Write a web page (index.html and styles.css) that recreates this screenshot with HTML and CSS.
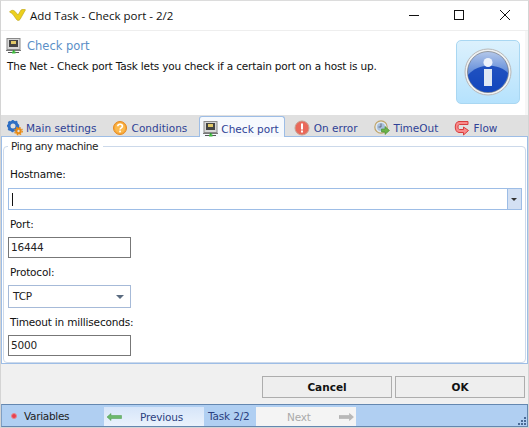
FILE: index.html

```html
<!DOCTYPE html>
<html lang="en">
<head>
  <meta charset="UTF-8" />
  <title>Add Task - Check port - 2/2</title>
  <link rel="stylesheet" href="styles.css">
</head>
<body>
  <svg class="defs" width="0" height="0">
    <defs>
      <symbol id="icoPort" viewBox="0 0 16 16">
        <rect x="1" y="0.5" width="13" height="11" fill="#d8d8d8" stroke="#8a8a8a"/>
        <rect x="3" y="2" width="9" height="7" fill="#444"/>
        <rect x="5" y="3" width="5" height="3" fill="#e0c868"/>
        <rect x="0" y="12" width="15" height="1" fill="#777"/>
        <rect x="7" y="12" width="1.5" height="2" fill="#30a030"/>
        <rect x="2" y="14" width="11" height="1" fill="#555"/>
        <rect x="6" y="13.5" width="3.5" height="2" fill="#3fc03f"/>
      </symbol>
    </defs>
  </svg>

  <div class="window">
    <div class="titlebar">
      <svg class="app-icon" width="17" height="12" viewBox="0 0 17 12">
        <path d="M0.5 3 C2.5 0.5 5 1 6.5 3 L9 6 L12 1 C13 0.2 15.5 0.2 16.5 0.8 L11 10.5 C10 11.7 8.5 11.7 7.5 10.5 L4 5.5 C3 4.2 1.5 3.6 0.5 3 Z" fill="#ecd01c" stroke="#b8a018" stroke-width="0.6"/>
      </svg>
      <span class="title">Add Task - Check port - 2/2</span>
      <div class="winbtns">
        <svg width="46" height="30" viewBox="0 0 46 30"><rect x="19" y="15" width="10" height="1" fill="#111"/></svg>
        <svg width="46" height="30" viewBox="0 0 46 30"><rect x="18.5" y="10.5" width="9" height="9" fill="none" stroke="#111"/></svg>
        <svg width="46" height="30" viewBox="0 0 46 30"><path d="M18 10 L28 20 M28 10 L18 20" stroke="#111" fill="none"/></svg>
      </div>
    </div>

    <div class="header">
      <div class="header-text">
        <div class="header-name">
          <svg width="16" height="16"><use href="#icoPort"/></svg>
          <span>Check port</span>
        </div>
        <p class="header-desc">The Net - Check port Task lets you check if a certain port on a host is up.</p>
      </div>
      <div class="info-tile">
        <svg width="48" height="48" viewBox="0 0 48 48">
          <defs>
            <linearGradient id="ball" x1="0" y1="0" x2="0" y2="1">
              <stop offset="0" stop-color="#b4c8ea"/>
              <stop offset="0.45" stop-color="#6c94dc"/>
              <stop offset="1" stop-color="#2a62d0"/>
            </linearGradient>
          </defs>
          <circle cx="24" cy="24" r="23" fill="#eef1f3" stroke="#b8b8b8"/>
          <circle cx="24" cy="24" r="20.5" fill="url(#ball)" stroke="#555" stroke-width="0.5"/>
          <path d="M4 27 C14 15 34 15 44 25 C43 36 34 44 24 44 C14 44 5 36 4 27 Z" fill="#0b3fb8" opacity="0.8"/>
          <circle cx="24" cy="14.5" r="4.5" fill="#eef3fb"/>
          <rect x="20" y="21" width="8" height="17" fill="#dfe8f4"/>
        </svg>
      </div>
    </div>

    <div class="tabs">
      <div class="tab">
        <svg width="16" height="16" viewBox="0 0 16 16">
          <circle cx="6" cy="6" r="4" fill="none" stroke="#2f6fc4" stroke-width="3"/>
          <circle cx="6" cy="6" r="5.5" fill="none" stroke="#2f6fc4" stroke-width="1.5" stroke-dasharray="2 2"/>
          <circle cx="11.5" cy="11" r="2.2" fill="none" stroke="#e88a14" stroke-width="2"/>
          <circle cx="11.5" cy="11" r="3.8" fill="none" stroke="#e88a14" stroke-width="1.2" stroke-dasharray="1.6 1.4"/>
        </svg>
        <span>Main settings</span>
      </div>
      <div class="tab">
        <svg width="16" height="16" viewBox="0 0 16 16">
          <circle cx="7" cy="8" r="6.5" fill="#f7a83a" stroke="#e68a1e"/>
          <circle cx="7" cy="8" r="5" fill="#fbb94e"/>
          <path d="M4.8 6.2 C4.8 3.6 9.4 3.6 9.4 6.2 C9.4 7.8 7 7.8 7 9.6" fill="none" stroke="#fff" stroke-width="1.6"/>
          <rect x="6.2" y="10.6" width="1.7" height="1.7" fill="#fff"/>
        </svg>
        <span>Conditions</span>
      </div>
      <div class="tab tab-on">
        <svg width="16" height="16"><use href="#icoPort"/></svg>
        <span>Check port</span>
      </div>
      <div class="tab tab-err">
        <svg width="16" height="16" viewBox="0 0 16 16">
          <circle cx="8" cy="8" r="7" fill="#e9695a" stroke="#c9a090"/>
          <rect x="7" y="3.5" width="2" height="6" fill="#fff"/>
          <rect x="7" y="10.5" width="2" height="2" fill="#fff"/>
        </svg>
        <span>On error</span>
      </div>
      <div class="tab tab-time">
        <svg width="16" height="16" viewBox="0 0 16 16">
          <circle cx="7" cy="7" r="6.2" fill="#dfe8f2" stroke="#bfa468" stroke-width="1.2"/>
          <circle cx="7" cy="7" r="4" fill="#a8c0dc"/>
          <path d="M7 3.5 V7 H4.5" fill="none" stroke="#556" stroke-width="0.8"/>
          <path d="M7.5 9 H11 V6.5 L15.5 10.5 L11 14.5 V12 H7.5 Z" fill="#6cb34a" stroke="#3f8a2a" stroke-width="0.6"/>
        </svg>
        <span>TimeOut</span>
      </div>
      <div class="tab">
        <svg width="16" height="16" viewBox="0 0 16 16">
          <path d="M14 1.5 H5 C0 1.5 0 12.5 5 12.5 H9.5 V15 L14.5 10.5 L9.5 7 V9.5 H5.5 C3.5 9.5 3.5 4.5 5.5 4.5 H14 Z" fill="#f98a8a" stroke="#d83c3c"/>
        </svg>
        <span>Flow</span>
      </div>
    </div>

    <div class="panel">
      <fieldset class="group">
        <legend>Ping any machine</legend>
        <label class="lbl lbl-first">Hostname:</label>
        <div class="combo">
          <span class="caret"></span>
          <span class="combo-btn"></span>
        </div>
        <label class="lbl">Port:</label>
        <div class="field">16444</div>
        <label class="lbl">Protocol:</label>
        <div class="select">TCP<span class="select-arrow"></span></div>
        <label class="lbl">Timeout in milliseconds:</label>
        <div class="field">5000</div>
      </fieldset>
    </div>

    <div class="actions">
      <button class="btn">Cancel</button>
      <button class="btn">OK</button>
    </div>

    <div class="statusbar">
      <span class="dot"></span>
      <span class="vars">Variables</span>
      <div class="nav nav-prev">
        <svg width="15" height="8" viewBox="0 0 15 8"><path d="M0 4 L4 0.5 V2.5 H14.5 V5.5 H4 V7.5 Z" fill="#6cb86c" stroke="#4a9a4a" stroke-width="0.5"/></svg>
        <span>Previous</span>
      </div>
      <span class="step">Task 2/2</span>
      <div class="nav nav-next">
        <span>Next</span>
        <svg width="15" height="8" viewBox="0 0 15 8"><path d="M14.5 4 L10.5 0.5 V2.5 H0 V5.5 H10.5 V7.5 Z" fill="#b8b8b8" stroke="#a8a8a8" stroke-width="0.5"/></svg>
      </div>
      <svg class="grip" width="10" height="10" viewBox="0 0 10 10">
        <rect x="7" y="1" width="2" height="2" fill="#4a6a94"/>
        <rect x="4" y="4" width="2" height="2" fill="#4a6a94"/>
        <rect x="7" y="4" width="2" height="2" fill="#4a6a94"/>
        <rect x="1" y="7" width="2" height="2" fill="#4a6a94"/>
        <rect x="4" y="7" width="2" height="2" fill="#4a6a94"/>
        <rect x="7" y="7" width="2" height="2" fill="#4a6a94"/>
      </svg>
    </div>
  </div>
</body>
</html>
```

FILE: styles.css

```css
* { box-sizing: border-box; }
html, body { margin: 0; padding: 0; }
body { width: 529px; height: 428px; overflow: hidden; font-family: "DejaVu Sans", sans-serif; font-size: 10.5px; letter-spacing: -0.17px; color: #111; background: #f0f0f0; }
.defs { position: absolute; }
.window { width: 529px; height: 428px; border: 1px solid #d4d4d4; border-top-color: #dcdcdc; display: flex; flex-direction: column; }

.titlebar { height: 30px; flex: none; background: #fff; display: flex; align-items: center; padding-left: 8px; padding-bottom: 1px; border-bottom: 1px solid #eeeeee; }
.app-icon { margin-right: 4px; }
.title { font-family: "Open Sans", sans-serif; font-size: 11.5px; letter-spacing: 0; color: #111; }
.winbtns { margin-left: auto; display: flex; }
.winbtns svg { display: block; }

.header { height: 84px; flex: none; background: #fff; display: flex; padding: 0 5px 0 5px; border-right: 3px solid #f6f6f6; }
.header-text { flex: 1; }
.header-name { display: flex; align-items: center; gap: 5px; margin-top: 6px; height: 17px; font-size: 11.5px; letter-spacing: 0; color: #5b8fc7; }
.header-desc { margin: 6px 0 0 1px; }
.info-tile { width: 64px; height: 64px; margin-top: 9px; border: 1px solid #a9d7f2; border-radius: 5px; background: linear-gradient(#dcf1fd, #b5e2fd); display: flex; align-items: center; justify-content: center; }

.tabs { height: 21px; flex: none; background: #e0e0e0; display: flex; align-items: flex-end; padding-left: 2px; letter-spacing: 0.02px; }
.tab { height: 17px; display: flex; align-items: center; gap: 3px; padding: 0 4px; margin-right: 8px; color: #2f4296; }
.tab-on { height: 21px; padding: 3px 5px 0 3px; gap: 2px; margin-right: 5px; background: #f6f9fd; border: 1px solid #9dbde6; border-bottom: none; border-radius: 3px 3px 0 0; margin-bottom: -1px; position: relative; }
.tab-err { gap: 4px; }
.tab-time { gap: 4px; }

.panel { height: 228px; flex: none; background: #fff; border: 1px solid #9dbde6; padding: 3px 1px 0 1px; }
.group { margin: 0; padding: 0 3px 0 4px; height: 223px; border: 1px solid #ccd9ea; border-radius: 4px; }
.group legend { padding: 0 5px 0 3px; margin-left: 0; color: #222; letter-spacing: -0.4px; }
.lbl { display: block; margin: 8px 0 6px 2px; line-height: 13px; }
.lbl-first { margin-top: 16px; margin-bottom: 7px; }

.combo { height: 22px; border: 1px solid #9dbde6; background: #fff; display: flex; align-items: center; padding-left: 3px; }
.caret { width: 1px; height: 13px; background: #111; }
.combo-btn { margin-left: auto; width: 14px; height: 20px; background: #d3e0f3; border-left: 1px solid #9dbde6; position: relative; }
.combo-btn::after { content: ""; position: absolute; left: 3px; top: 9px; border-left: 3px solid transparent; border-right: 3px solid transparent; border-top: 3px solid #333; }

.field { width: 123px; height: 21px; border: 1px solid #777; background: #fff; padding-left: 2px; line-height: 19px; color: #222; }
.select { width: 123px; height: 23px; border: 1px solid #a6bad8; background: #fff; padding-left: 4px; line-height: 21px; color: #222; position: relative; }
.select-arrow { position: absolute; right: 6px; top: 9px; border-left: 4px solid transparent; border-right: 4px solid transparent; border-top: 4px solid #5a6b80; }

.actions { height: 40px; flex: none; display: flex; justify-content: flex-end; gap: 3px; padding: 12px 3px 0 0; }
.btn { width: 130px; height: 22px; border: 1px solid #adadad; background: #eeeeee; font-family: "DejaVu Sans", sans-serif; font-size: 10.5px; font-weight: bold; color: #111; padding: 0; }

.statusbar { height: 23px; flex: none; background: #b0cff2; border: 1px solid #6487b0; border-left-color: #7f9fc4; display: flex; align-items: center; position: relative; }
.dot { width: 6px; height: 6px; margin-left: 9px; border-radius: 50%; background: #e8414f; border: 1px solid #e58a90; }
.vars { margin-left: 7px; width: 80px; color: #222; letter-spacing: -0.3px; }
.nav { height: 19px; align-self: flex-end; display: flex; align-items: center; background: linear-gradient(#d6e5f9, #eaf2fc); }
.nav-prev { width: 100px; color: #2b3f7f; padding-left: 3px; }
.nav-prev span { margin-left: 18px; }
.step { width: 52px; padding-left: 4px; color: #2b3f7f; }
.nav-next { width: 100px; background: #f4f4f4; color: #aaa; padding-left: 31px; }
.nav-next svg { margin-left: 28px; }
.grip { position: absolute; right: 0; bottom: 0; }
```
